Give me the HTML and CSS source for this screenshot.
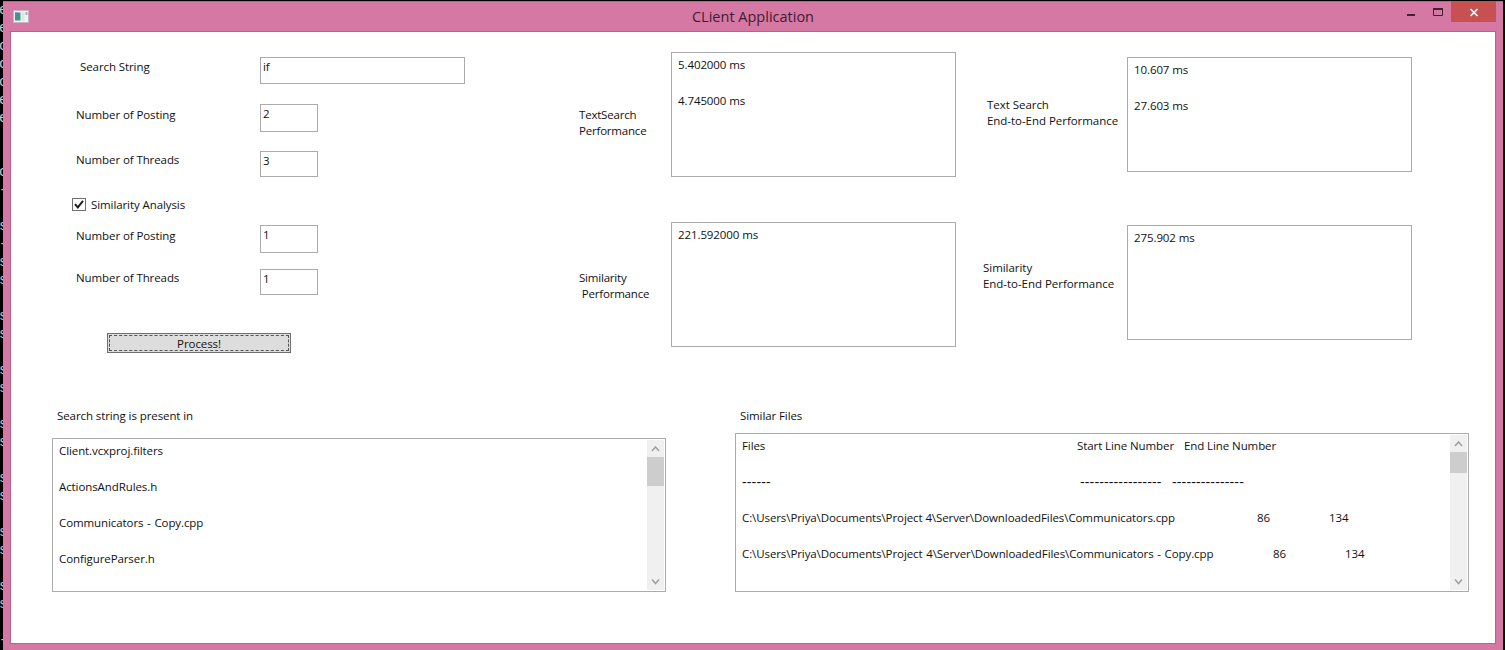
FILE: index.html
```html
<!DOCTYPE html>
<html lang="en">
<head>
<meta charset="utf-8">
<title>CLient Application</title>
<link rel="stylesheet" href="styles.css">
</head>
<body>
<div class="console"><pre class="console-text">e
e
c
c
c
e
e


c
-

s
-
s
s

s
s

s
s

s
s

s
s

s
s

s
s

-
</pre></div>
<main class="window">
  <header class="titlebar">
    <svg class="app-icon" width="16" height="13" viewBox="0 0 16 13">
      <rect x="0.5" y="0.5" width="15" height="12" fill="#f1f4f4" stroke="#c9b3c2"/>
      <rect x="2" y="2.5" width="5.5" height="8" fill="#4b9187"/>
      <rect x="2" y="2.5" width="2.5" height="3" fill="#5a86a4"/>
      <rect x="8.5" y="2" width="3" height="9" fill="#dde6e6"/>
      <rect x="12.5" y="2" width="2" height="3" fill="#b9a3b3"/>
    </svg>
    <h1 class="title">CLient Application</h1>
    <div class="controls">
      <svg class="control" width="26" height="21" viewBox="0 0 26 21"><rect x="8" y="13" width="8" height="2" fill="#3d2230"/></svg>
      <svg class="control" width="26" height="21" viewBox="0 0 26 21"><path d="M8.500 8v6.500h9V8" fill="none" stroke="#3d2230"/><rect x="8" y="7" width="10" height="2" fill="#3d2230"/></svg>
      <svg class="control close" width="45" height="21" viewBox="0 0 45 21"><path d="M19.500 8l7 7M26.500 8l-7 7" fill="none" stroke="#fff" stroke-width="1.700"/></svg>
    </div>
  </header>
  <section class="client">
    <div class="top">
      <form class="form">
        <div class="row search"><label class="label">Search String</label><div class="input wide">if</div></div>
        <div class="row posting"><label class="label">Number of Posting</label><div class="input">2</div></div>
        <div class="row threads"><label class="label">Number of Threads</label><div class="input short">3</div></div>
        <div class="check">
          <svg class="checkbox" width="14" height="13" viewBox="0 0 14 13"><rect x="0.500" y="0.500" width="13" height="12" fill="#fff" stroke="#707070"/><path d="M3 6.200l2.800 3.200L11 2.800" fill="none" stroke="#212121" stroke-width="2"/></svg>
          <span>Similarity Analysis</span>
        </div>
        <div class="row sim-posting"><label class="label">Number of Posting</label><div class="input">1</div></div>
        <div class="row sim-threads"><label class="label">Number of Threads</label><div class="input short">1</div></div>
        <div class="process"><span class="focus">Process!</span></div>
      </form>
      <div class="metrics">
        <div class="metric"><div class="caption text">TextSearch<br>Performance</div><div class="output">5.402000 ms<br><br>4.745000 ms</div></div>
        <div class="metric"><div class="caption text">Similarity<br>&nbsp;Performance</div><div class="output">221.592000 ms</div></div>
      </div>
      <div class="metrics end">
        <div class="metric"><div class="caption e2e">Text Search<br>End-to-End Performance</div><div class="output">10.607 ms<br><br>27.603 ms</div></div>
        <div class="metric"><div class="caption e2e-sim">Similarity<br>End-to-End Performance</div><div class="output">275.902 ms</div></div>
      </div>
    </div>
    <div class="bottom">
      <div class="pane found">
        <h2 class="pane-title">Search string is present in</h2>
        <div class="list">
          <div class="items">
            <div>Client.vcxproj.filters</div>
            <div>ActionsAndRules.h</div>
            <div class="spaced">Communicators - Copy.cpp</div>
            <div>ConfigureParser.h</div>
          </div>
          <div class="scrollbar">
            <svg width="17" height="17" viewBox="0 0 17 17"><path d="M5 11l3.500-4 3.500 4" fill="none" stroke="#a0a0a0" stroke-width="1.500"/></svg>
            <div class="thumb"></div>
            <svg class="down" width="17" height="17" viewBox="0 0 17 17"><path d="M5 6.500l3.500 4 3.500-4" fill="none" stroke="#a0a0a0" stroke-width="1.500"/></svg>
          </div>
        </div>
      </div>
      <div class="pane similar">
        <h2 class="pane-title">Similar Files</h2>
        <div class="list">
          <div class="items">
            <div class="cols head"><span>Files</span><span>Start Line Number</span><span>End Line Number</span></div>
            <div class="cols rule"><span>------</span><span>-----------------</span><span>---------------</span></div>
            <div class="cols first"><span>C:\Users\Priya\Documents\Project 4\Server\DownloadedFiles\Communicators.cpp</span><span>86</span><span>134</span></div>
            <div class="cols second"><span class="spaced">C:\Users\Priya\Documents\Project 4\Server\DownloadedFiles\Communicators - Copy.cpp</span><span>86</span><span>134</span></div>
          </div>
          <div class="scrollbar">
            <svg width="17" height="17" viewBox="0 0 17 17"><path d="M5 11l3.500-4 3.500 4" fill="none" stroke="#a0a0a0" stroke-width="1.500"/></svg>
            <div class="thumb small"></div>
            <svg class="down" width="17" height="17" viewBox="0 0 17 17"><path d="M5 6.500l3.500 4 3.500-4" fill="none" stroke="#a0a0a0" stroke-width="1.500"/></svg>
          </div>
        </div>
      </div>
    </div>
  </section>
</main>
</body>
</html>
```
FILE: styles.css
```css
* { box-sizing: border-box; }
body {
  margin: 0;
  height: 650px;
  overflow: hidden;
  display: flex;
  background: #000;
  color: #111;
  font: 11.5px/16px "Open Sans", "Noto Sans", sans-serif;
  letter-spacing: -0.09px;
}
h1, h2 { margin: 0; font-weight: normal; font-size: inherit; }

/* Console window behind, only its first pixels show */
.console { width: 3px; overflow: hidden; }
.console-text {
  margin: 1px 0 0 -1px;
  color: #c8c8c8;
  font: 14px/18px "Liberation Mono", monospace;
}

/* Window frame */
.window {
  width: 1500px;
  height: 650px;
  margin-top: 1px;
  display: flex;
  flex-direction: column;
  padding: 0 7px 0 7px;
  background: #d678a4;
  border-top: 1px solid #c2608c;
}
.titlebar { display: flex; height: 29px; flex: none; align-items: flex-start; }
.app-icon { margin: 8px 0 0 3px; }
.title {
  flex: 1;
  margin-left: 78px;
  padding-top: 5px;
  text-align: center;
  font-size: 14.5px;
  line-height: 20px;
  letter-spacing: 0;
  color: #421c30;
}
.controls { display: flex; margin-top: -1px; }
.control { display: block; }
.close { background: #c75050; }

.client {
  height: 613px;
  flex: none;
  background: #fff;
  border: 1px solid #b3648a;
}
.top { display: flex; height: 370px; }

/* Form */
.form { width: 568px; padding: 25px 0 0 61px; display: flex; flex-direction: column; }
.row { display: flex; align-items: flex-start; padding-left: 4px; }
.label { width: 184px; }
.input {
  width: 58px;
  height: 28px;
  border: 1px solid #ababab;
  padding: 1px 2px;
}
.wide { width: 205px; height: 27px; }
.short { height: 26px; }
.search { padding-left: 8px; }
.search .label { width: 180px; margin-top: 2px; }
.posting { margin-top: 20px; }
.posting .label { margin-top: 3px; }
.threads { margin-top: 19px; }
.threads .label { margin-top: 1px; }
.check { display: flex; height: 16px; margin-top: 20px; gap: 5px; }
.checkbox { margin-top: 1px; }
.sim-posting { margin-top: 12px; }
.sim-posting .label { margin-top: 3px; }
.sim-threads { margin-top: 16px; }
.sim-threads .label { margin-top: 1px; }
.process {
  display: flex;
  width: 184px;
  height: 20px;
  margin: 38px 0 0 35px;
  padding: 1px;
  background: #ddd;
  border: 1px solid #707070;
}
.focus {
  flex: 1;
  border: 1px dashed #555;
  text-align: center;
  line-height: 16px;
}

/* Timing outputs */
.metrics { width: 404px; padding-top: 20px; display: flex; flex-direction: column; gap: 45px; }
.metric { display: flex; height: 125px; }
.caption { width: 92px; padding-top: 55px; }
.text { letter-spacing: -0.2px; }
.metric + .metric .caption { padding-top: 48px; }
.output { width: 285px; border: 1px solid #ababab; padding: 3px 6px; line-height: 18px; }
.end { width: 460px; padding-top: 25px; gap: 53px; }
.end .metric { height: 115px; }
.end .caption { letter-spacing: -0.04px; }
.e2e { width: 144px; padding: 40px 0 0 4px; }
.end .e2e-sim { width: 144px; }
.end .metric + .metric .e2e-sim { padding-top: 35px; }

/* Result lists */
.bottom { display: flex; gap: 69px; padding: 6px 0 0 41px; }
.pane-title { padding-left: 5px; }
.list { display: flex; border: 1px solid #ababab; padding: 1px; }
.items { flex: 1; padding: 2px 5px; line-height: 18px; display: flex; flex-direction: column; gap: 18px; }
.found { width: 614px; }
.found .list { height: 154px; margin-top: 14px; }
.similar { width: 734px; }
.similar .list { height: 159px; margin-top: 9px; }
.scrollbar { width: 17px; background: #f0f0f0; display: flex; flex-direction: column; }
.scrollbar svg { display: block; flex: none; }
.thumb { height: 29px; background: #cdcdcd; }
.small { height: 21px; }
.down { margin-top: auto; }
.spaced { word-spacing: 0.8px; }

.cols { display: grid; white-space: nowrap; }
.head { grid-template-columns: 335px 107px auto; }
.rule { grid-template-columns: 338px 92px auto; font-size: 14.5px; letter-spacing: 0.13px; }
.first { grid-template-columns: 515px 72px auto; }
.second { grid-template-columns: 531px 72px auto; }
```
